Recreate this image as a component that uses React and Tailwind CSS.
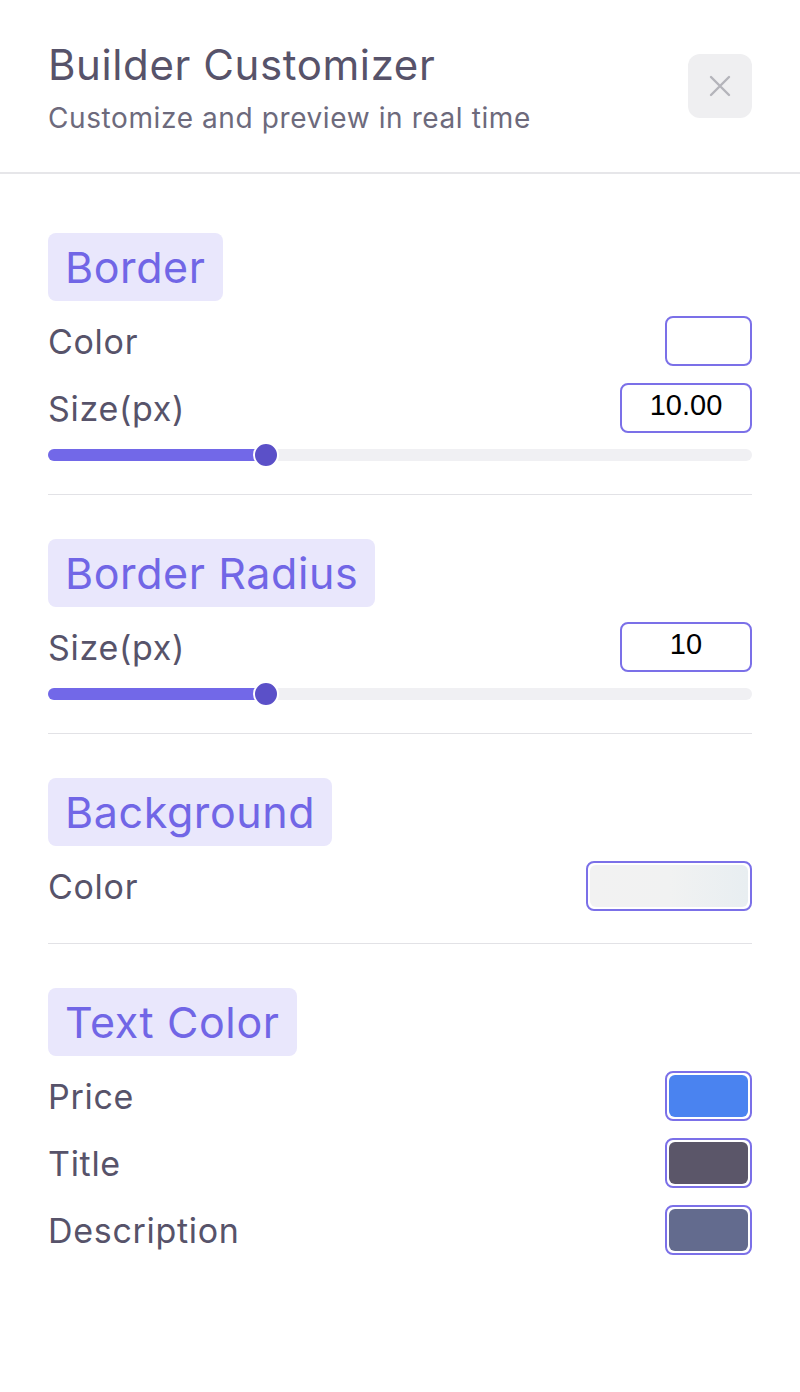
import React from "react";

const Badge = ({ children }) => (
    <div className="self-start rounded-lg bg-[#e9e7fc] px-[17px] h-[68px] flex items-center text-[43px] tracking-[0.6px] text-[#7166e6]">
        {children}
    </div>
);

const Row = ({ label, children }) => (
    <div className="flex items-center justify-between h-[50px]">
        <span className="text-[34px] tracking-[0.7px] text-[#57536a]">{label}</span>
        {children}
    </div>
);

const Swatch = ({ color, wide = false }) => (
    <div
        className={`rounded-lg border-2 border-[#7b70e8] p-[2px] h-[50px] ${wide ? "w-[166px]" : "w-[87px]"}`}
    >
        <div className="h-full w-full rounded-md" style={{ background: color }} />
    </div>
);

const NumberBox = ({ value }) => (
    <div className="flex items-center justify-center pb-[4px] w-[132px] h-[50px] rounded-lg border-2 border-[#7b70e8] text-[29px] text-black font-['Liberation_Sans',sans-serif]">
        {value}
    </div>
);

const Slider = ({ percent }) => (
    <div className="relative h-[12px] mt-[1px] rounded-full bg-[#f0f0f3]">
        <div
            className="absolute left-0 top-0 h-full rounded-full bg-[#7268e8]"
            style={{ width: `${percent}%` }}
        />
        <div
            className="absolute top-1/2 -translate-x-1/2 -translate-y-1/2 w-[26px] h-[26px] rounded-full bg-[#5b50c8] border-2 border-white"
            style={{ left: `${percent}%` }}
        />
    </div>
);

const Divider = () => <div className="h-px bg-[#e2e2e6]" />;

export default function App() {
    return (
        <div className="min-h-[1392px] bg-white font-['Inter',sans-serif]">
            <div className="flex items-start justify-between px-[48px] pt-[40px] pb-[38px] border-b-2 border-[#e6e6e9]">
                <div className="flex flex-col">
                    <h1 className="text-[42px] leading-[50px] tracking-[0.6px] text-[#57536a]">Builder Customizer</h1>
                    <p className="text-[28px] leading-[32px] mt-[12px] tracking-[0.6px] text-[#6d6a7c]">
                        Customize and preview in real time
                    </p>
                </div>
                <button className="mt-[14px] w-[64px] h-[64px] rounded-xl bg-[#efeff1] flex items-center justify-center">
                    <svg width="22" height="22" viewBox="0 0 22 22" fill="none" stroke="#b4b4bb" strokeWidth="2.4" strokeLinecap="round">
                        <path d="M2 2L20 20M20 2L2 20" />
                    </svg>
                </button>
            </div>

            <div className="px-[48px] pt-[59px] flex flex-col">
                <div className="flex flex-col gap-[15px] pb-[33px]">
                    <Badge>Border</Badge>
                    <div className="flex flex-col gap-[17px]">
                        <Row label="Color">
                            <Swatch color="#ffffff" />
                        </Row>
                        <Row label="Size(px)">
                            <NumberBox value="10.00" />
                        </Row>
                    </div>
                    <Slider percent={31} />
                </div>
                <Divider />

                <div className="flex flex-col gap-[15px] pt-[44px] pb-[33px]">
                    <Badge>Border Radius</Badge>
                    <Row label="Size(px)">
                        <NumberBox value="10" />
                    </Row>
                    <Slider percent={31} />
                </div>
                <Divider />

                <div className="flex flex-col gap-[15px] pt-[44px] pb-[32px]">
                    <Badge>Background</Badge>
                    <Row label="Color">
                        <Swatch color="linear-gradient(90deg,#f2f2f2,#f1f2f2 50%,#e8eef1)" wide />
                    </Row>
                </div>
                <Divider />

                <div className="flex flex-col gap-[15px] pt-[44px]">
                    <Badge>Text Color</Badge>
                    <div className="flex flex-col gap-[17px]">
                        <Row label="Price">
                            <Swatch color="#4a83f0" />
                        </Row>
                        <Row label="Title">
                            <Swatch color="#5b5669" />
                        </Row>
                        <Row label="Description">
                            <Swatch color="#636b8e" />
                        </Row>
                    </div>
                </div>
            </div>
        </div>
    );
}
